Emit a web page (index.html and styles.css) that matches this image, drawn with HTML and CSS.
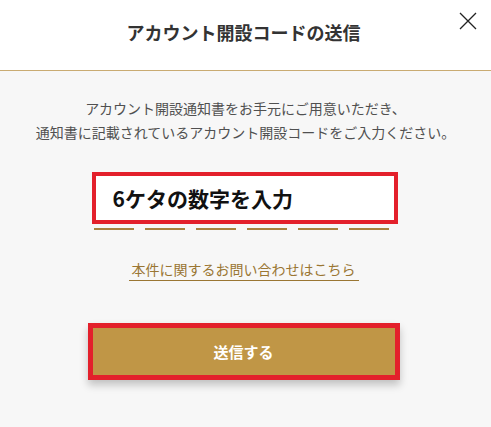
FILE: index.html
```html
<!DOCTYPE html>
<html lang="ja">
<head>
<meta charset="utf-8">
<title>アカウント開設コードの送信</title>
<link rel="stylesheet" href="styles.css">
</head>
<body>
<div class="modal">
  <header class="modal-header">
    <h1 class="modal-title">アカウント開設コードの送信</h1>
    <button class="close" aria-label="閉じる">
      <svg width="18" height="18" viewBox="0 0 18 18"><path d="M1 1L17 17M17 1L1 17" stroke="#222" stroke-width="1.3" fill="none"/></svg>
    </button>
  </header>
  <main class="modal-body">
    <p class="lead">アカウント開設通知書をお手元にご用意いただき、<br>通知書に記載されているアカウント開設コードをご入力ください。</p>
    <div class="code-field">
      <div class="code-box">6ケタの数字を入力</div>
      <div class="slots">
        <span class="slot"></span><span class="slot"></span><span class="slot"></span><span class="slot"></span><span class="slot"></span><span class="slot"></span>
      </div>
    </div>
    <a class="help-link" href="#">本件に関するお問い合わせはこちら</a>
    <button class="submit">送信する</button>
  </main>
</div>
</body>
</html>
```
FILE: styles.css
```css
html, body {
  margin: 0;
  padding: 0;
}
body {
  width: 491px;
  height: 427px;
  overflow: hidden;
  background: #f7f7f7;
  font-family: "Noto Sans CJK JP", "Noto Sans", sans-serif;
}
.modal {
  display: flex;
  flex-direction: column;
  height: 427px;
}
.modal-header {
  position: relative;
  height: 70px;
  background: #fff;
  border-bottom: 1px solid #c9ab72;
  display: flex;
  align-items: center;
  justify-content: center;
}
.modal-title {
  margin: 0;
  font-size: 18px;
  font-weight: 700;
  color: #333;
  letter-spacing: 0;
  transform: translate(-2px, -3px);
}
.close {
  position: absolute;
  top: 12px;
  right: 14px;
  width: 18px;
  height: 18px;
  padding: 0;
  border: 0;
  background: none;
  display: block;
}
.close svg { display: block; }
.modal-body {
  display: flex;
  flex-direction: column;
  align-items: center;
  padding-top: 25px;
}
.lead {
  margin: 0;
  font-size: 14px;
  line-height: 24px;
  color: #505050;
  text-align: center;
}
.code-field {
  margin-top: 28px;
  display: flex;
  flex-direction: column;
  align-items: center;
  transform: translateX(-1px);
}
.code-box {
  box-sizing: border-box;
  width: 306px;
  height: 52px;
  border: 4px solid #e3202b;
  background: #fff;
  display: flex;
  align-items: center;
  padding-left: 17px;
  font-size: 21px;
  font-weight: 700;
  color: #111;
}
.slots {
  margin-top: 4px;
  display: flex;
  gap: 11px;
  transform: translateX(-3px);
}
.slot {
  width: 40px;
  height: 2px;
  background: #a8823f;
}
.help-link {
  margin-top: 29px;
  padding: 0 3px;
  font-size: 14px;
  line-height: 20px;
  color: #9a7633;
  text-decoration: none;
  border-bottom: 1px solid #9a7633;
  padding-bottom: 1px;
  transform: translateX(-2px);
}
.submit {
  margin-top: 42px;
  box-sizing: border-box;
  width: 312px;
  height: 57px;
  border: 5px solid #e3202b;
  background: #c09646;
  color: #fff;
  font-family: inherit;
  font-size: 15px;
  font-weight: 700;
  box-shadow: 0 5px 8px rgba(0, 0, 0, 0.22);
  transform: translateX(-2px);
}
```
